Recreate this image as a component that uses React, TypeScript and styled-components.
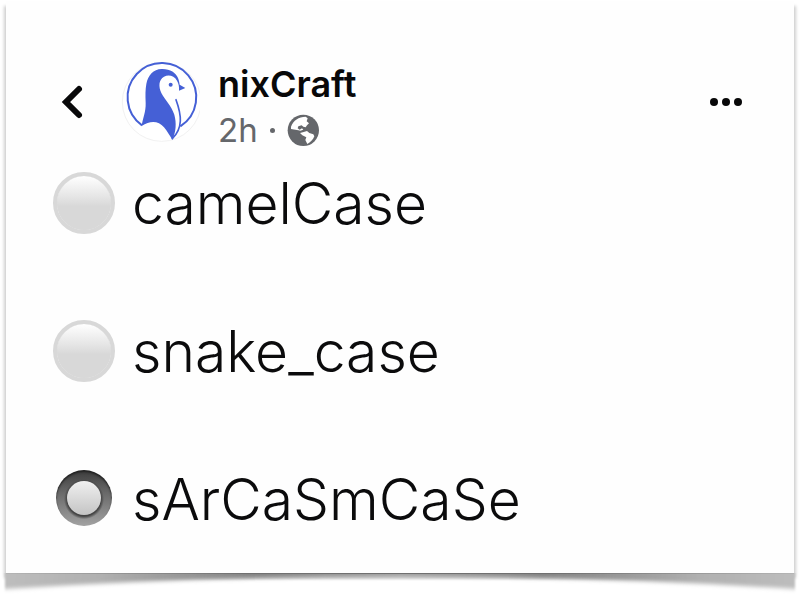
import React, { useState } from "react";
import styled, { createGlobalStyle } from "styled-components";

const GlobalStyle = createGlobalStyle`
  *, *::before, *::after { box-sizing: border-box; }
  body {
    margin: 0;
    background: #fff;
    color: #0b0b0c;
    font-family: Inter, "Liberation Sans", sans-serif;
  }
`;

const Page = styled.div`
  padding: 1px 6px 0;
`;

const Card = styled.main`
  padding: 61px 47px 43px;
  background: #fefefe;
  box-shadow: -2px 5px 3px #d0d0d0, 2px 5px 3px #d0d0d0;
`;

const Header = styled.header`
  display: flex;
  align-items: center;
  height: 80px;
`;

const IconButton = styled.button`
  display: flex;
  align-items: center;
  justify-content: center;
  width: 38px;
  height: 44px;
  padding: 0;
  border: 0;
  background: none;
  color: #080809;
  cursor: pointer;
`;

const MoreButton = styled(IconButton)`
  margin-right: 2px;
`;

const AvatarLink = styled.a`
  display: block;
  height: 84px;
  margin: 0 18px 4px 29px;
`;

const Author = styled.div`
  flex: 1;
  padding-top: 12px;
`;

const Name = styled.a`
  display: block;
  color: #080809;
  font-size: 36px;
  font-weight: 600;
  line-height: 44px;
  text-decoration: none;
`;

const Meta = styled.div`
  display: flex;
  align-items: center;
  gap: 12px;
  color: #65676b;
  font-size: 33px;
  line-height: 48px;
`;

const Dot = styled.span`
  width: 5px;
  height: 5px;
  border-radius: 50%;
  background: currentColor;
`;

const Options = styled.form`
  display: grid;
  gap: 86px;
  margin-top: 30px;
`;

const Option = styled.label`
  display: flex;
  align-items: center;
  gap: 17px;
  height: 62px;
  font-size: 57px;
  font-weight: 300;
  line-height: 62px;
  cursor: pointer;
`;

const OptionText = styled.span`
  padding-top: 2px;
`;

const Radio = styled.input`
  appearance: none;
  flex: none;
  width: 62px;
  height: 62px;
  margin: 0;
  border: 4px solid #d8d8d8;
  border-radius: 50%;
  background: linear-gradient(#fff, #e4e4e4 40%, #d8d8d8 56%) padding-box #d8d8d8;
  cursor: pointer;

  &:checked {
    display: grid;
    place-items: center;
    width: 56px;
    height: 56px;
    margin: 0 3px 2px;
    border: 0;
    background:
      radial-gradient(circle at 50% 52%, #444 17px, transparent 20px),
      linear-gradient(#3c3c3c, #686868 40%, #a2a2a2);
    box-shadow: inset 0 2px 2px #222;
  }

  &:checked::before {
    content: "";
    width: 34px;
    height: 34px;
    border-radius: 50%;
    background: linear-gradient(#f0f0f0, #c4c4c4);
  }
`;

const Shadow = styled.svg`
  display: block;
  width: 100%;
  height: 22px;
  overflow: visible;
`;

function PenguinLogo() {
  return (
    <svg width="80" height="84" viewBox="0 0 240 252" aria-hidden="true">
      <circle cx="125" cy="132" r="118" fill="#fff" stroke="#f1f1f1" strokeWidth="3" />
      <path
        d="M66 202A103 103 0 1 1 181 205"
        fill="none"
        stroke="#4560d6"
        strokeWidth="6"
      />
      <path
        d="M65 204C68 182 78 162 77 135C76 112 76 94 79 78C84 51 100 34 125 33C149 32 168 44 174 60C177 67 178 74 179 80L196 90L177 98C178 86 176 76 171 68C162 52 145 49 132 56C116 65 115 85 124 105C136 127 154 143 163 170C170 195 168 222 157 245C149 233 142 220 132 208C115 188 91 187 65 204Z"
        fill="#4560d6"
      />
      <path
        d="M168 125C176 147 182 164 181 189C180 211 169 230 157 242"
        fill="none"
        stroke="#4560d6"
        strokeWidth="5"
        strokeLinecap="round"
      />
      <circle cx="152" cy="80" r="6" fill="#4560d6" />
    </svg>
  );
}

function Globe() {
  return (
    <svg width="33" height="33" viewBox="0 0 99 99" role="img" aria-label="Public">
      <circle cx="49" cy="49" r="47" fill="#65676b" />
      <path
        d="M12 38C19 19 35 8 56 8L62 13L59 22L66 28L60 34L56 40L49 38L44 34L34 37L32 43L38 47L45 43L49 47L40 50L34 49L12 45Z"
        fill="#fff"
      />
      <path
        d="M39 57L50 54L60 51L67 57L79 61L82 67C78 78 70 85 61 90L55 78L58 70L46 64Z"
        fill="#fff"
      />
    </svg>
  );
}

const choices = ["camelCase", "snake_case", "sArCaSmCaSe"];

export default function App() {
  const [selected, setSelected] = useState("sArCaSmCaSe");
  return (
    <>
      <GlobalStyle />
      <Page>
        <Card>
          <Header>
            <IconButton type="button" aria-label="Back">
              <svg width="24" height="36" viewBox="0 0 24 36" aria-hidden="true">
                <path d="M19 5L6 18L19 31" fill="none" stroke="currentColor" strokeWidth="6" strokeLinecap="round" strokeLinejoin="miter" />
              </svg>
            </IconButton>
            <AvatarLink href="#profile" aria-label="nixCraft profile">
              <PenguinLogo />
            </AvatarLink>
            <Author>
              <Name href="#profile">nixCraft</Name>
              <Meta>
                <span>2h</span>
                <Dot />
                <Globe />
              </Meta>
            </Author>
            <MoreButton type="button" aria-label="More options">
              <svg width="34" height="10" viewBox="0 0 34 10" fill="currentColor" aria-hidden="true">
                <circle cx="5" cy="5" r="4" />
                <circle cx="17" cy="5" r="4" />
                <circle cx="29" cy="5" r="4" />
              </svg>
            </MoreButton>
          </Header>
          <Options>
            {choices.map((choice) => (
              <Option key={choice}>
                <Radio
                  type="radio"
                  name="case"
                  value={choice}
                  checked={selected === choice}
                  onChange={() => setSelected(choice)}
                />
                <OptionText>{choice}</OptionText>
              </Option>
            ))}
          </Options>
        </Card>
        <Shadow viewBox="0 0 788 22" preserveAspectRatio="none" aria-hidden="true">
          <defs>
            <linearGradient id="tone">
              <stop offset="0" stopColor="#bdbdbd" />
              <stop offset="0.12" stopColor="#b0b0b0" />
              <stop offset="0.32" stopColor="#808080" />
              <stop offset="0.5" stopColor="#999" />
              <stop offset="0.68" stopColor="#808080" />
              <stop offset="0.88" stopColor="#b0b0b0" />
              <stop offset="1" stopColor="#bdbdbd" />
            </linearGradient>
            <linearGradient id="edge">
              <stop offset="0" stopColor="#b5b5b5" />
              <stop offset="0.3" stopColor="#707070" />
              <stop offset="0.7" stopColor="#707070" />
              <stop offset="1" stopColor="#b5b5b5" />
            </linearGradient>
            <filter id="soft" x="-5%" y="-50%" width="110%" height="200%">
              <feGaussianBlur stdDeviation="1 2" />
            </filter>
            <clipPath id="below">
              <rect x="-6" width="800" height="30" />
            </clipPath>
          </defs>
          <g clipPath="url(#below)">
            <path d="M-1 -6H789V16Q394 -10 -1 16Z" fill="url(#tone)" filter="url(#soft)" />
          </g>
          <rect width="788" height="1" fill="url(#edge)" />
        </Shadow>
      </Page>
    </>
  );
}
